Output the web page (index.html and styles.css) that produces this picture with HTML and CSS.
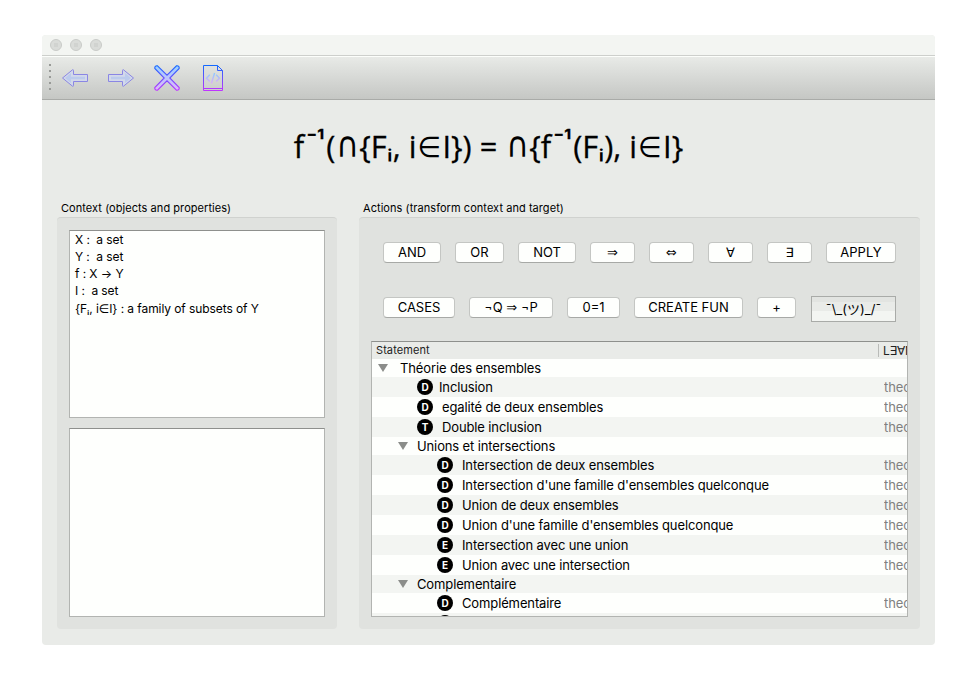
FILE: index.html
```html
<!DOCTYPE html>
<html lang="en">
<head>
<meta charset="utf-8">
<title>Proof assistant</title>
<link rel="stylesheet" href="styles.css">
</head>
<body>
<div class="window">
  <div class="titlebar"><i></i><i></i><i></i></div>
  <div class="toolbar">
    <div class="grip"><i></i><i></i><i></i><i></i><i></i></div>
    <svg class="tool" viewBox="0 0 28 28">
      <defs>
        <linearGradient id="g" x1="0" y1="0" x2="0" y2="28" gradientUnits="userSpaceOnUse"><stop offset="0" stop-color="#0a6cff"/><stop offset="1" stop-color="#c832ff"/></linearGradient>
        <linearGradient id="p" x1="0" y1="0" x2="0" y2="28" gradientUnits="userSpaceOnUse"><stop offset="0" stop-color="#94d4ff"/><stop offset="1" stop-color="#e4b4fa"/></linearGradient>
        <linearGradient id="c" x1="0" y1="9" x2="0" y2="20" gradientUnits="userSpaceOnUse"><stop offset="0" stop-color="#8ccaff"/><stop offset="1" stop-color="#e3aaf8"/></linearGradient>
      </defs>
      <path d="M1.5 14 11.5 5.8Q12.5 5.5 12.5 6.5V10.5H26.5V17.5H12.5V21.5Q12.5 22.5 11.5 22.2Z" fill="#d3d9ea" stroke="#8a86e4"/>
      <path d="M4 14 10 9V12.7H24V15.3H10V19Z" fill="#bccbed"/>
    </svg>
    <svg class="tool" viewBox="0 0 28 28">
      <path d="M26.5 14 16.5 5.8Q15.5 5.5 15.5 6.5V10.5H1.5V17.5H15.5V21.5Q15.5 22.5 16.5 22.2Z" fill="#d3d9ea" stroke="#8a86e4"/>
      <path d="M24 14 18 9V12.7H4V15.3H18V19Z" fill="#bccbed"/>
    </svg>
    <svg class="tool" viewBox="0 0 28 28">
      <path d="M4.5 1.8 14 11.2 23.5 1.8Q26.5 1.5 26.2 4.5L16.8 14 26.2 23.5Q26.5 26.5 23.5 26.2L14 16.8 4.5 26.2Q1.5 26.5 1.8 23.5L11.2 14 1.8 4.5Q1.5 1.5 4.5 1.8Z" fill="url(#p)" stroke="url(#g)" stroke-width="1.1"/>
    </svg>
    <svg class="tool" viewBox="0 0 28 28">
      <path d="M4.5 1.5H18.5L23.5 6.5V26.5H4.5ZM18.5 1.5V6.5H23.5M4.5 24.5H23.5" fill="none" stroke="url(#g)"/>
      <path d="M10.8 10.8 7.5 14.2 10.8 17.6M17.2 10.8 20.5 14.2 17.2 17.6M15.6 9 12.4 19.5" fill="none" stroke="url(#c)" stroke-width="1.4"/>
    </svg>
  </div>
  <div class="target"><span>f</span><span class="sup">⁻¹</span><span>(</span><span class="cap">∩</span><span>{F</span><span class="idx">ᵢ</span><span>, i</span><span class="in">∈</span><span>I}) = </span><span class="cap">∩</span><span>{f</span><span class="sup">⁻¹</span><span>(F</span><span class="idx">ᵢ</span><span>), i</span><span class="in">∈</span><span>I}</span></div>
  <div class="columns">
    <section class="context">
      <h2>Context (objects and properties)</h2>
      <div class="group">
        <ul class="list">
          <li>X :&nbsp; a set</li><li>Y :&nbsp; a set</li><li>f : X → Y</li><li>I :&nbsp; a set</li><li>{Fᵢ, i∈I} : a family of subsets of Y</li>
        </ul>
        <ul class="list"></ul>
      </div>
    </section>
    <section class="actions">
      <h2>Actions (transform context and target)</h2>
      <div class="group">
        <div class="buttons">
          <button class="w58">AND</button><button class="w49">OR</button><button class="w58">NOT</button><button class="w45 sym">⇒</button><button class="w45 sym">⇔</button><button class="w45">∀</button><button class="w45">∃</button><button class="w70">APPLY</button>
        </div>
        <div class="buttons second">
          <button class="w72">CASES</button><button class="w84">¬Q <span class="sym">⇒</span> ¬P</button><button class="w53">0=1</button><button class="w109">CREATE FUN</button><button class="w39">+</button><button class="shrug">¯\_(ツ)_/¯</button>
        </div>
        <div class="tree">
          <div class="head"><span>Statement</span><span class="lean">L∃∀N</span></div>
          <div class="row folder"><b class="tri"></b><span>Théorie des ensembles</span></div>
          <div class="row leaf"><b class="dot">D</b><span class="near">Inclusion</span><em>theorem</em></div>
          <div class="row leaf"><b class="dot">D</b><span>egalité de deux ensembles</span><em>theorem</em></div>
          <div class="row leaf"><b class="dot">T</b><span>Double inclusion</span><em>theorem</em></div>
          <div class="row folder sub"><b class="tri"></b><span>Unions et intersections</span></div>
          <div class="row leaf deep"><b class="dot">D</b><span>Intersection de deux ensembles</span><em>theorem</em></div>
          <div class="row leaf deep"><b class="dot">D</b><span>Intersection d'une famille d'ensembles quelconque</span><em>theorem</em></div>
          <div class="row leaf deep"><b class="dot">D</b><span>Union de deux ensembles</span><em>theorem</em></div>
          <div class="row leaf deep"><b class="dot">D</b><span>Union d'une famille d'ensembles quelconque</span><em>theorem</em></div>
          <div class="row leaf deep"><b class="dot">E</b><span>Intersection avec une union</span><em>theorem</em></div>
          <div class="row leaf deep"><b class="dot">E</b><span>Union avec une intersection</span><em>theorem</em></div>
          <div class="row folder sub"><b class="tri"></b><span>Complementaire</span></div>
          <div class="row leaf deep"><b class="dot">D</b><span>Complémentaire</span><em>theorem</em></div>
          <div class="row leaf deep"><b class="dot"></b></div>
        </div>
      </div>
    </section>
  </div>
</div>
</body>
</html>
```
FILE: styles.css
```css
* { box-sizing: border-box; }
body { margin: 0; padding: 35px 42px; background: #fff; color: #000; font-family: Inter, "DejaVu Sans", "Noto Sans CJK JP", sans-serif; font-size: 13px; }
.window { width: 893px; height: 610px; background: #e9ebe8; border-radius: 4px; overflow: hidden; }
.titlebar { height: 21px; background: #f3f5f2; border-bottom: 1px solid #cdcfcc; display: flex; gap: 8px; padding: 4px 8px; }
.titlebar i { width: 12px; height: 12px; border-radius: 50%; background: #dadcd9; border: 1px solid #c9cbc8; }
.titlebar i::after { content: ""; display: block; width: 4px; height: 4px; margin: 3px; background: #d1d3d0; }
.toolbar { height: 44px; border-top: 1px solid #fcfefb; border-bottom: 1px solid #a9aba8; background: linear-gradient(#e8eae7, #c5c7c4); display: flex; align-items: center; padding-left: 7px; }
.grip { width: 2px; margin-right: 10px; display: flex; flex-direction: column; gap: 4px; margin-top: -3px; }
.grip i { width: 2px; height: 2px; background: #989a97; }
.tool { width: 28px; height: 28px; margin-right: 18px; flex: none; }
.target { height: 101px; display: flex; justify-content: center; font-family: "Open Sans", "DejaVu Sans", sans-serif; font-size: 30.8px; line-height: 38px; padding-top: 27px; white-space: pre; -webkit-text-stroke: 0.3px #000; }
.target span { flex: none; }
.target .sup { width: 22px; text-align: center; font-family: Inter, sans-serif; font-size: 25px; font-weight: 500; line-height: 29px; letter-spacing: -0.5px; }
.target .cap { width: 24px; display: flex; justify-content: center; font-family: "DejaVu Sans", sans-serif; transform: scaleY(1.15); transform-origin: 50% 31px; -webkit-text-stroke: 0; }
.target .in { width: 26px; display: flex; justify-content: center; font-family: "DejaVu Sans", sans-serif; font-size: 27px; line-height: 42px; transform: scaleY(1.06); -webkit-text-stroke: 0; }
.target .idx { width: 6px; display: flex; justify-content: center; font-family: Inter, sans-serif; line-height: 38px; -webkit-text-stroke: 0; }
.columns { display: flex; gap: 22px; padding-left: 15px; }
h2 { margin: 0; padding-left: 4px; height: 16px; font-size: 11px; line-height: 15px; font-weight: 400; white-space: nowrap; letter-spacing: 0.055px; }
.group { height: 412px; background: #e0e2df; border-top: 1px solid #d0d2cf; border-radius: 4px; padding: 12px; }
.context { width: 280px; }
.actions { width: 561px; }
.list { list-style: none; margin: 0 0 10px; padding: 1px 5px; height: 188px; width: 256px; background: #fefffd; border: 1px solid #b2b4b1; border-top-color: #8e908d; font-size: 12px; line-height: 17px; letter-spacing: -0.08px; white-space: nowrap; }
.list li:nth-child(-n+4) { margin-top: -1px; margin-bottom: 1px; }
.list + .list { height: 189px; margin: 0; }
.buttons { display: flex; gap: 14px; padding: 12px 0 0 12px; height: 66px; }
.buttons.second { height: 45px; padding-top: 1px; }
button { height: 21px; padding: 0; border: 1px solid #c4c6c3; border-bottom-color: #a7a9a6; border-radius: 4px; background: #fefffd; color: #000; font: inherit; line-height: 19px; white-space: nowrap; }
.sym { font-family: "DejaVu Sans", sans-serif; font-size: 13px; }
.w58 { width: 58px; } .w49 { width: 49px; } .w45 { width: 45px; } .w70 { width: 70px; } .w72 { width: 72px; }
.w84 { width: 84px; } .w53 { width: 53px; } .w109 { width: 109px; } .w39 { width: 39px; }
.shrug { width: 85px; height: 26px; margin-left: 1px; margin-top: -1px; border: 1px solid #a9aba8; border-radius: 0; background: linear-gradient(#e2e4e1 0 20%, #e9ebe8 20% 58%, #f3f5f2 58%); font-size: 13px; }
.tree { height: 276px; width: 537px; background: #fefffd; border: 1px solid #b2b4b1; border-top-color: #8e908d; overflow: hidden; }
.head { height: 17px; background: #e9ebe8; font-size: 11px; line-height: 17px; display: flex; justify-content: space-between; padding-left: 4px; color: #222; letter-spacing: 0.08px; }
.lean { width: 29px; height: 13px; margin-top: 2px; line-height: 13px; border-left: 1px solid #b9bbb8; padding-left: 4px; overflow: hidden; white-space: nowrap; font-size: 12px; letter-spacing: -0.2px; }
.row { display: flex; align-items: center; height: 20px; white-space: nowrap; letter-spacing: -0.125px; }
.row:nth-child(odd) { background: #f3f5f2; }
.folder { height: 18px; padding-left: 6px; }
.tri { border: 5px solid transparent; border-top: 8px solid #8b8d8a; border-bottom: 0; margin-right: 12px; }
.sub { padding-left: 26px; }
.sub .tri { margin-right: 9px; }
.leaf { padding-left: 45px; }
.deep { padding-left: 65px; }
.dot { width: 16px; height: 16px; border-radius: 50%; background: #000; color: #fff; font-size: 10px; line-height: 16px; text-align: center; margin-right: 9px; flex: none; }
.near { margin-left: -3px; }
.row em { margin-left: auto; width: 23px; overflow: hidden; font-style: normal; color: #808080; }
```
